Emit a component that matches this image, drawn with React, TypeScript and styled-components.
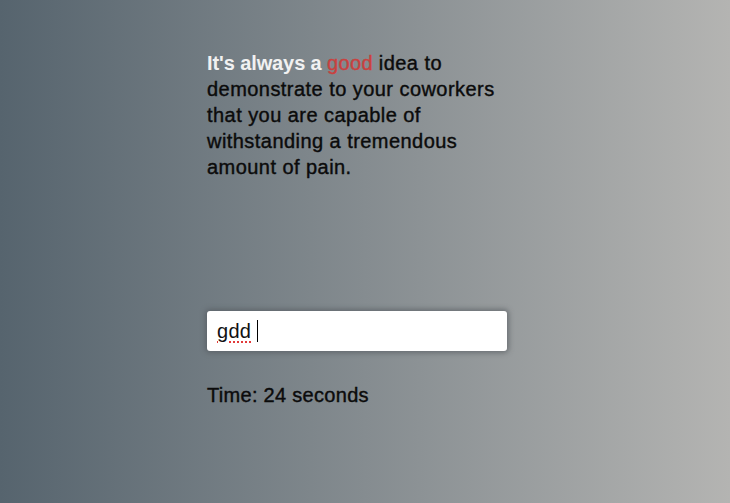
import React from "react";
import styled, { createGlobalStyle } from "styled-components";

const Global = createGlobalStyle`
  html, body { margin: 0; padding: 0; height: 100%; }
  body {
    font-family: "Liberation Sans", Arial, Helvetica, sans-serif;
    background: linear-gradient(to right, #56646e 0%, #b4b4b2 100%);
    min-height: 503px;
  }
`;

const Page = styled.div`
  width: 730px;
  height: 503px;
  box-sizing: border-box;
  padding: 50px 0 0 207px;
  display: flex;
  flex-direction: column;
`;

const Quote = styled.p`
  margin: 0;
  width: 300px;
  font-size: 20px;
  line-height: 26px;
  letter-spacing: 0.45px;
  color: #0b0b0b;
  -webkit-text-stroke: 0.4px #0b0b0b;
`;

const Typed = styled.span`
  color: #f1f1f1;
  font-weight: bold;
  letter-spacing: -0.1px;
  -webkit-text-stroke: 0;
`;

const Current = styled.span`
  color: #c9413f;
  letter-spacing: 0.3px;
  -webkit-text-stroke: 0.4px #c9413f;
`;

const InputBox = styled.div`
  margin-top: 131px;
  width: 300px;
  height: 40px;
  box-sizing: border-box;
  background: #ffffff;
  border-radius: 3px;
  box-shadow: 0 0 5px 2px rgba(80, 85, 90, 0.6);
  display: flex;
  align-items: center;
  padding: 0 10px;
  font-size: 20px;
  letter-spacing: 0.3px;
  color: #111;
`;

const Word = styled.span`
  text-decoration: underline dotted #e23a3a;
  text-decoration-thickness: 2px;
  text-underline-offset: 4px;
`;

const Caret = styled.span`
  display: inline-block;
  width: 1px;
  height: 22px;
  background: #000;
  margin-left: 6px;
`;

const Timer = styled.div`
  margin-top: 33px;
  font-size: 20px;
  line-height: 22px;
  letter-spacing: 0.3px;
  color: #0b0b0b;
  -webkit-text-stroke: 0.4px #0b0b0b;
`;

export default function App() {
  return (
    <>
      <Global />
      <Page>
        <Quote>
          <Typed>It's always a </Typed>
          <Current>good</Current> idea to demonstrate to your coworkers that you
          are capable of withstanding a tremendous amount of pain.
        </Quote>
        <InputBox>
          <Word>gdd</Word>
          <Caret />
        </InputBox>
        <Timer>Time: 24 seconds</Timer>
      </Page>
    </>
  );
}
